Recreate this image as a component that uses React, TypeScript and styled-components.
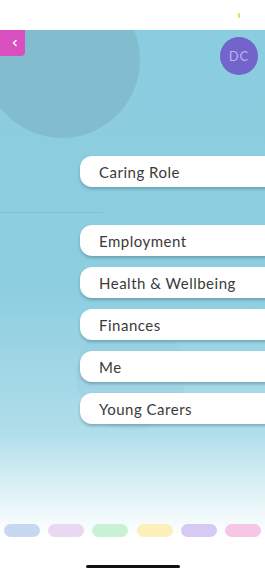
import styled, { createGlobalStyle } from 'styled-components';

const GlobalStyle = createGlobalStyle`
  html, body {
    margin: 0;
    padding: 0;
    background: #ffffff;
  }
  * {
    box-sizing: border-box;
  }
`;

const menuItems = ['Employment', 'Health & Wellbeing', 'Finances', 'Me', 'Young Carers'];
const pillColours = ['#c6d9f1', '#e8d8f1', '#c9f2d5', '#fbf0b9', '#d6caf4', '#f5c7e5'];

export default function App() {
  return (
    <StPage>
      <GlobalStyle />
      <StStatusBar>
        <StStatusMark />
      </StStatusBar>
      <StMain>
        <StBigCircle />
        <StFaintCircle />
        <StHeader>
          <StBackBtn>
            <svg width="8" height="8" viewBox="0 0 8 8">
              <path d="M5 1.5 L2.5 4 L5 6.5" stroke="#ffffff" strokeWidth="1.6" fill="none" strokeLinecap="round" strokeLinejoin="round" />
            </svg>
          </StBackBtn>
          <StAvatar>DC</StAvatar>
        </StHeader>
        <StMenu>
          <StMenuBtn>Caring Role</StMenuBtn>
          <StDivider />
          <StList>
            {menuItems.map((item) => (
              <StMenuBtn key={item}>{item}</StMenuBtn>
            ))}
          </StList>
        </StMenu>
        <StFooter>
          <StPills>
            {pillColours.map((c) => (
              <StPill key={c} $colour={c} />
            ))}
          </StPills>
          <StHomeBar />
        </StFooter>
      </StMain>
    </StPage>
  );
}

const StPage = styled.div`
  width: 265px;
  height: 574px;
  display: flex;
  flex-direction: column;
  overflow: hidden;
  font-family: 'Lato', 'Noto Sans', sans-serif;
`;

const StStatusBar = styled.div`
  height: 30px;
  flex-shrink: 0;
  background: #ffffff;
  display: flex;
  justify-content: flex-end;
  padding: 13px 25px 0 0;
`;

const StStatusMark = styled.div`
  width: 2px;
  height: 5px;
  border-radius: 1px;
  background: #e8e04a;
`;

const StMain = styled.div`
  position: relative;
  flex: 1;
  display: flex;
  flex-direction: column;
  overflow: hidden;
  background: linear-gradient(
    180deg,
    #8bcde0 0%,
    #8dcee0 48%,
    #b0deea 74%,
    #dff2f6 85%,
    #ffffff 93%
  );
`;

const StBigCircle = styled.div`
  position: absolute;
  left: -16px;
  top: -48px;
  width: 156px;
  height: 156px;
  border-radius: 50%;
  background: #82bdcf;
`;

const StFaintCircle = styled.div`
  position: absolute;
  left: 76px;
  top: 290px;
  width: 110px;
  height: 110px;
  border-radius: 50%;
  background: rgba(120, 185, 205, 0.12);
`;

const StHeader = styled.div`
  position: relative;
  display: flex;
  justify-content: space-between;
  align-items: flex-start;
  height: 45px;
`;

const StBackBtn = styled.button`
  width: 25px;
  height: 26px;
  border: none;
  padding: 0 0 0 4px;
  display: flex;
  align-items: center;
  justify-content: center;
  background: #da4fc0;
  border-radius: 0 0 4px 0;
`;

const StAvatar = styled.div`
  width: 38px;
  height: 38px;
  margin: 7px 7px 0 0;
  border-radius: 50%;
  background: #7264cb;
  color: #bdb2f2;
  font-size: 13px;
  letter-spacing: 1px;
  display: flex;
  align-items: center;
  justify-content: center;
`;

const StMenu = styled.div`
  position: relative;
  margin-top: 81px;
  display: flex;
  flex-direction: column;
`;

const StMenuBtn = styled.div`
  margin-left: 80px;
  width: 200px;
  height: 31px;
  padding-left: 19px;
  display: flex;
  align-items: center;
  background: #ffffff;
  border-radius: 12px 0 0 12px;
  box-shadow: 0 2px 3px rgba(40, 80, 95, 0.35);
  color: #3a3a3a;
  font-size: 15px;
  letter-spacing: 0.5px;
`;

const StDivider = styled.div`
  width: 103px;
  height: 1px;
  margin: 25px 0 12px;
  background: #84c2d3;
`;

const StList = styled.div`
  display: flex;
  flex-direction: column;
  gap: 11px;
`;

const StFooter = styled.div`
  position: relative;
  margin-top: auto;
  display: flex;
  flex-direction: column;
  align-items: center;
  padding-bottom: 6px;
`;

const StPills = styled.div`
  width: 100%;
  display: flex;
  justify-content: space-between;
  padding: 0 4px;
`;

const StPill = styled.div<{ $colour: string }>`
  width: 36px;
  height: 13px;
  border-radius: 7px;
  background: ${(p) => p.$colour};
`;

const StHomeBar = styled.div`
  width: 94px;
  height: 3px;
  margin-top: 28px;
  border-radius: 2px;
  background: #111111;
`;
